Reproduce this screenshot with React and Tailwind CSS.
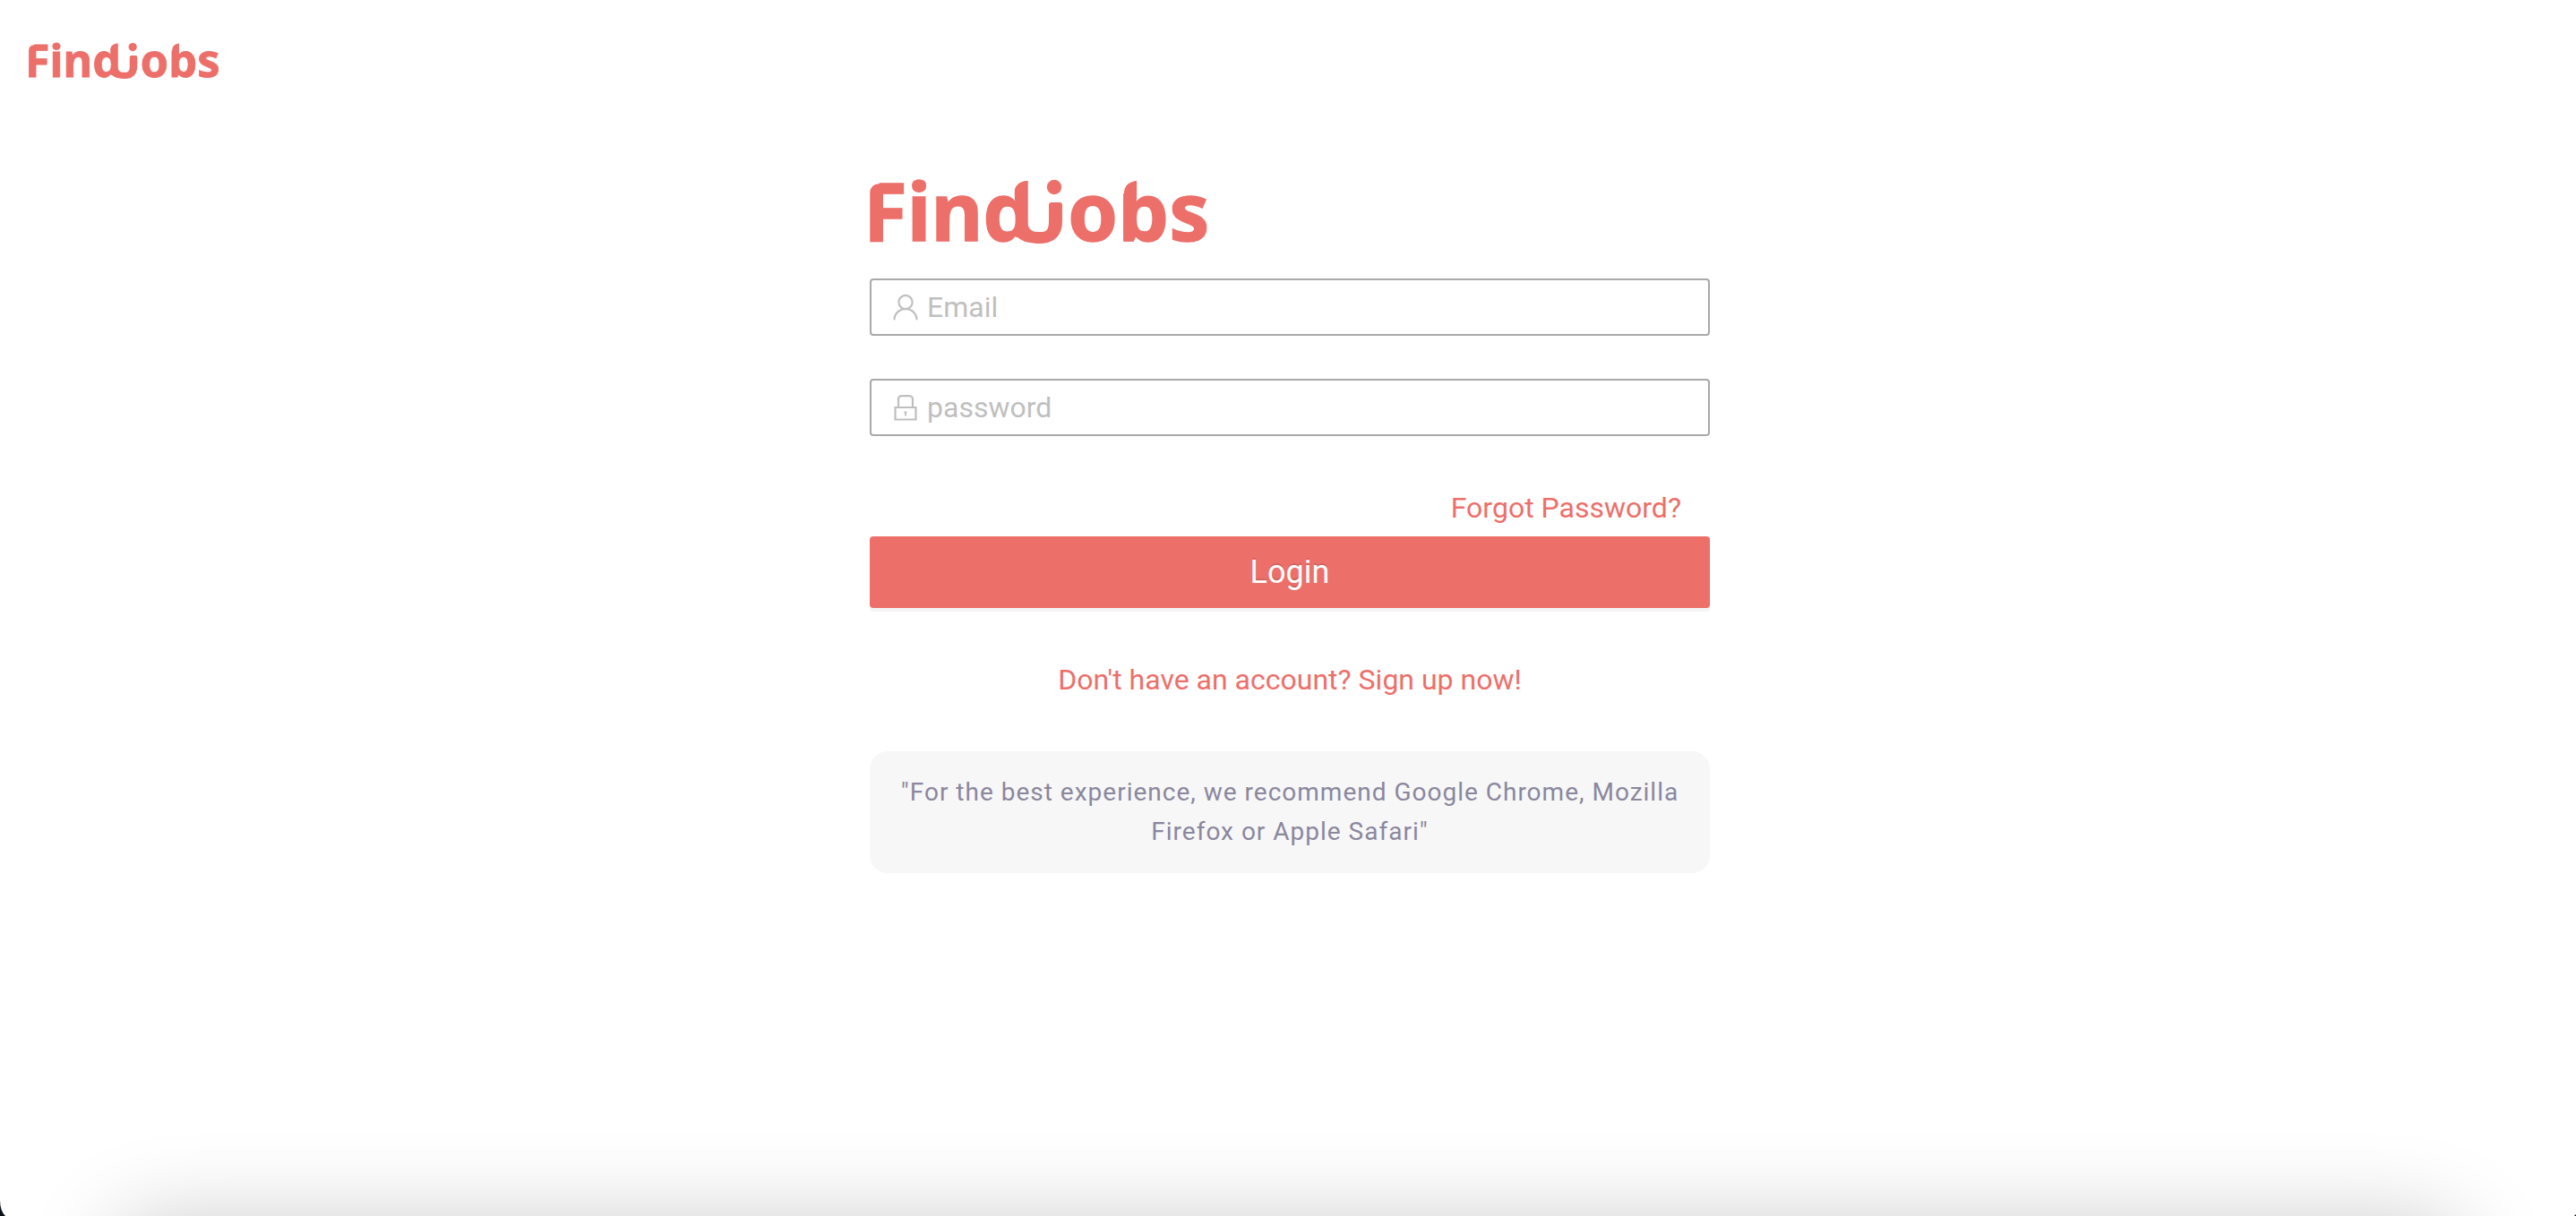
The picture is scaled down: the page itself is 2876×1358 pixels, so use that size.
import React from "react";

function Logo({ className }) {
  return (
    <svg
      viewBox="0 0 376 72"
      role="img"
      aria-label="Findjobs"
      className={className}
      fill="#ed6f6a"
    >
      <g fontFamily="'Noto Sans', 'Open Sans', sans-serif" fontWeight="700" stroke="#ed6f6a" strokeWidth="1.4">
        <text x="-7" y="68" fontSize="89">Find</text>
        <text x="221" y="68" fontSize="90">obs</text>
      </g>
      {/* rounded shoulders of the F, d and b, and the notch under the d */}
      <g fill="#ffffff">
        <path d="M-1 2 H11 V4 Q0 5 0 15 H-1 Z" />
        <path d="M158 -3 H178 V1 H174 Q161 3 161 17 H158 Z" />
        <path d="M281 -3 H302 V1 H297 Q284 3 284 15 H281 Z" />
        <path d="M154 72 L165 63 L178 72 Z" />
      </g>
      {/* hook that joins the d to the dot on its right */}
      <path d="M161 61 C170 59 174 55 174 50 L176 46 C176 54 181 58 187 58 L192 58 C198 58 200 54 200 46 L200 28 Q200 25 203 25 L212 25 Q215 25 215 28 L215 46 C215 62 206 71 190 71 C180 71 171 69 165 64 Z" />
      <circle cx="206" cy="8" r="8.2" />
    </svg>
  );
}

function UserIcon() {
  return (
    <svg viewBox="0 0 28 30" className="h-[30px] w-7 shrink-0" fill="none" stroke="#bfbfbf" strokeWidth="2.2" strokeLinecap="round" aria-hidden="true">
      <circle cx="14" cy="9.5" r="7.6" />
      <path d="M1.5 28.5 C2 21.5 7.5 17 14 17 S26 21.5 26.5 28.5" />
    </svg>
  );
}

function LockIcon() {
  return (
    <svg viewBox="0 0 28 30" className="h-[30px] w-7 shrink-0" fill="none" stroke="#bfbfbf" strokeWidth="2.2" aria-hidden="true">
      <path d="M2.5 15 H25.5 V28.5 H2.5 Z" />
      <path d="M6 15 V6 Q6 2.2 9.8 2.2 H18.2 Q22 2.2 22 6 V15" />
      <path d="M12.5 20.5 H15.5 M14 20 V24.5" strokeWidth="1.8" />
    </svg>
  );
}

function Field({ icon, label, type }) {
  return (
    <label className="mb-12 flex h-16 items-center gap-[10px] rounded border-2 border-[#a9a9a9] bg-white px-6">
      {icon}
      <input
        type={type}
        placeholder={label}
        aria-label={label}
        className="h-full min-w-0 flex-1 bg-transparent text-[32px] text-gray-700 outline-none placeholder:text-[#bfbfbf]"
      />
    </label>
  );
}

export default function App() {
  return (
    <div className="relative flex min-h-screen flex-col overflow-hidden bg-white pl-1 font-['Roboto',sans-serif]">
      <header className="px-7 pt-12">
        <a href="#" className="block w-fit">
          <Logo className="h-auto w-[212px] overflow-visible" />
        </a>
      </header>

      <main className="mx-auto w-full max-w-[938px] pt-28">
        <Logo className="mb-[38px] h-auto w-[376px] overflow-visible" />
        <form onSubmit={(e) => e.preventDefault()}>
          <Field icon={<UserIcon />} label="Email" type="email" />
          <Field icon={<LockIcon />} label="password" type="password" />
          <div className="flex justify-end pt-2 pr-8 pb-2">
            <a href="#" className="text-[32px] leading-12 text-[#ed6f6a]">Forgot Password?</a>
          </div>
          <button
            type="submit"
            className="block h-20 w-full rounded bg-[#ed6f6a] text-4xl text-white shadow-[0_4px_0_rgba(0,0,0,0.045)] [text-shadow:0_-2px_0_rgba(0,0,0,0.12)]"
          >
            Login
          </button>
        </form>
        <p className="pt-14 text-center">
          <a href="#" className="text-[32px] leading-12 text-[#ed6f6a]">Don't have an account? Sign up now!</a>
        </p>
        <p className="mt-14 rounded-[20px] bg-[#f7f7f7] p-6 text-center text-[28px] leading-11 tracking-[1px] text-[#8a879e]">
          "For the best experience, we recommend Google Chrome, Mozilla Firefox or Apple Safari"
        </p>
      </main>

      <div className="pointer-events-none absolute inset-x-32 top-full h-40 rounded-[40px] shadow-[0_8px_100px_0_rgba(0,0,0,0.22)]" />
      <svg viewBox="0 0 6 18" className="absolute bottom-0 left-0 h-[18px] w-1.5" fill="#0b1016" aria-hidden="true">
        <path d="M0 0 Q0 12 6 18 H0 Z" />
      </svg>
      <svg viewBox="0 0 2 2" className="absolute right-0 bottom-0 size-0.5" fill="#0b1016" aria-hidden="true">
        <path d="M2 0 V2 H0 Z" />
      </svg>
    </div>
  );
}
